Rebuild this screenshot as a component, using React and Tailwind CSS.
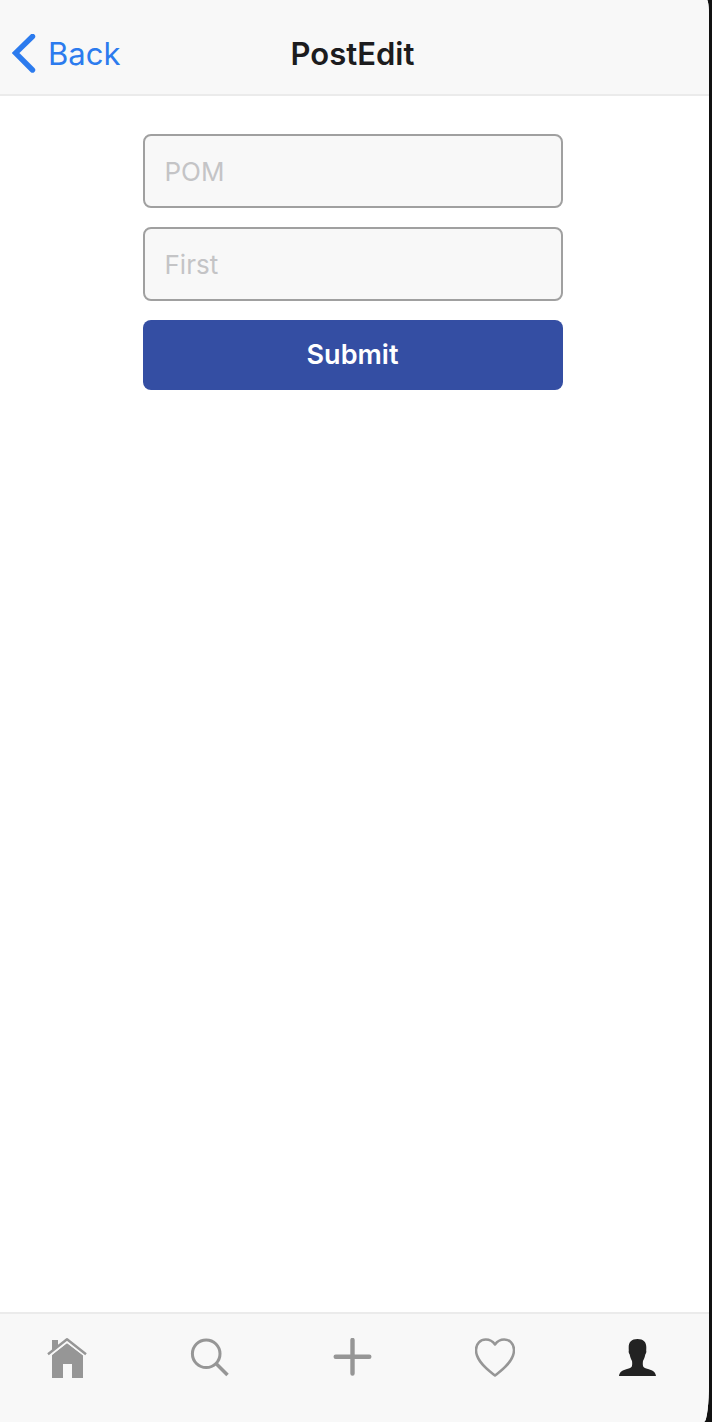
import React from "react";

function HomeIcon() {
  return (
    <svg viewBox="0 0 40 42" className="h-[42px] w-10" aria-hidden="true">
      <path fill="currentColor" d="M5 13V2h6v6z" />
      <path fill="currentColor" d="M20 5 36 17v23H25V26h-9v14H5V17z" />
      <path fill="none" stroke="#f8f8f8" strokeWidth="1.5" d="M2.500 17.700 20 4.100l17.500 13.600" />
      <path
        fill="none"
        stroke="currentColor"
        strokeWidth="2.4"
        strokeLinejoin="round"
        d="M1 16.300 20 1.300l19 15"
      />
    </svg>
  );
}

function SearchIcon() {
  return (
    <svg viewBox="0 0 40 42" className="h-[42px] w-10" aria-hidden="true">
      <g fill="none" stroke="currentColor">
        <circle cx="16.200" cy="15.800" r="13.800" strokeWidth="3" />
        <path strokeWidth="3.600" d="m26 25.500 11.500 11.500" />
      </g>
    </svg>
  );
}

function PlusIcon() {
  return (
    <svg viewBox="0 0 40 42" className="h-[42px] w-10" aria-hidden="true">
      <path
        fill="none"
        stroke="currentColor"
        strokeWidth="4.4"
        strokeLinecap="round"
        d="M19.500 2v33.600M2.700 18.800h33.600"
      />
    </svg>
  );
}

function HeartIcon() {
  return (
    <svg viewBox="0 0 40 42" className="h-[42px] w-10" aria-hidden="true">
      <path
        fill="none"
        stroke="currentColor"
        strokeWidth="2.500"
        strokeLinejoin="round"
        d="M20 37.500C15 33.500 1 24 1 12 1 5.500 5.500 1.500 10.800 1.500c4.200 0 7.400 2.400 9.200 5 1.800-2.600 5-5 9.200-5C34.500 1.500 39 5.500 39 12c0 12-14 21.500-19 25.500Z"
      />
    </svg>
  );
}

function PersonIcon() {
  return (
    <svg viewBox="0 0 40 42" className="h-[42px] w-10" aria-hidden="true">
      <path
        fill="currentColor"
        d="M19.500 1c-6 0-8.800 3.200-8.800 8 0 1.500 0 2.500.1 3.500-.4 1.200 0 3 .9 4 .4 2.500 1.300 4.500 2.300 6.500.3 2 .3 4-.2 5.500-.6 1.300-2.300 1.900-4.800 2.500C5 32 1.500 33.500 1 38h37c-.5-4.500-4-6-8-7-2.500-.6-4.200-1.200-4.800-2.500-.5-1.500-.5-3.500-.2-5.500 1-2 1.900-4 2.300-6.500.9-1 1.300-2.800.9-4 .1-1 .1-2 .1-3.500 0-4.800-2.800-8-8.800-8Z"
      />
    </svg>
  );
}

const tabs = [
  { label: "Home", Icon: HomeIcon },
  { label: "Search", Icon: SearchIcon },
  { label: "Add", Icon: PlusIcon },
  { label: "Likes", Icon: HeartIcon },
  { label: "Profile", Icon: PersonIcon, active: true },
];

export default function App() {
  return (
    <div className="flex min-h-screen bg-[#111111] pr-[3px] font-['Inter',sans-serif]">
      <div className="flex grow flex-col overflow-hidden bg-white [border-bottom-right-radius:5px_40px] [border-top-right-radius:2px_16px]">
        <header className="grid h-24 grid-cols-[1fr_auto_1fr] items-center border-b-2 border-[#ebebeb] bg-[#f8f8f8] pt-[14px] pr-1">
          <a href="#back" className="flex items-center gap-3 justify-self-start pl-3 text-[31px] leading-10 text-[#2c7bee]">
            <svg viewBox="0 0 24 40" className="h-10 w-6" aria-hidden="true">
              <path
                fill="none"
                stroke="currentColor"
                strokeWidth="5.400"
                strokeLinecap="round"
                strokeLinejoin="miter"
                d="M20.500 2.500 3.500 19l17 17"
              />
            </svg>
            Back
          </a>
          <h1 className="text-[31px] leading-10 font-semibold text-[#1c1c1e]">PostEdit</h1>
        </header>

        <main className="grow pt-[38px] pr-5 pl-4">
          <form className="mx-auto flex max-w-[420px] flex-col gap-[19px]" onSubmit={(e) => e.preventDefault()}>
            <input
              type="text"
              aria-label="POM"
              placeholder="POM"
              className="h-[74px] w-full rounded-lg border-2 border-[#a0a0a0] bg-[#f8f8f8] px-5 text-[26px] text-[#222222] placeholder:text-[#c4c4c6]"
            />
            <input
              type="text"
              aria-label="First"
              placeholder="First"
              className="h-[74px] w-full rounded-lg border-2 border-[#a0a0a0] bg-[#f8f8f8] px-5 text-[26px] text-[#222222] placeholder:text-[#c4c4c6]"
            />
            <button type="submit" className="h-[70px] w-full rounded-lg bg-[#344ea3] text-[27px] font-semibold text-white">
              Submit
            </button>
          </form>
        </main>

        <nav className="flex h-[110px] items-start justify-between border-t-2 border-[#ebebeb] bg-[#f8f8f8] pt-6 pr-[51px] pl-[47px]">
          {tabs.map(({ label, Icon, active }) => (
            <button
              key={label}
              type="button"
              aria-label={label}
              className={active ? "text-[#222222]" : "text-[#969696]"}
            >
              <Icon />
            </button>
          ))}
        </nav>
      </div>
    </div>
  );
}
